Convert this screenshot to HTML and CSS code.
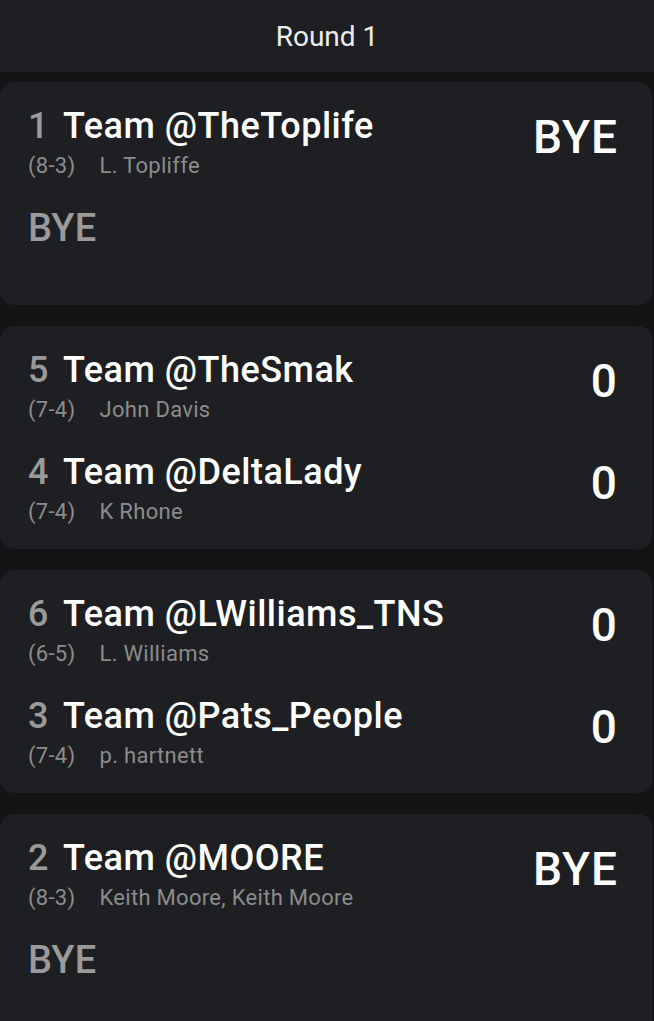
FILE: index.html
```html
<!DOCTYPE html>
<html>
<head>
<meta charset="utf-8">
<link rel="stylesheet" href="styles.css">
</head>
<body>
<header class="topbar">Round 1</header>
<main class="list">
  <section class="card">
    <div class="row">
      <div class="info">
        <div class="name"><span class="seed">1</span>Team @TheToplife</div>
        <div class="sub"><span class="rec">(8-3)</span>L. Topliffe</div>
      </div>
      <div class="score score-bye">BYE</div>
    </div>
    <div class="row">
      <div class="info">
        <div class="bye">BYE</div>
      </div>
    </div>
  </section>
  <section class="card">
    <div class="row">
      <div class="info">
        <div class="name"><span class="seed">5</span>Team @TheSmak</div>
        <div class="sub"><span class="rec">(7-4)</span>John Davis</div>
      </div>
      <div class="score">0</div>
    </div>
    <div class="row">
      <div class="info">
        <div class="name"><span class="seed">4</span>Team @DeltaLady</div>
        <div class="sub"><span class="rec">(7-4)</span>K Rhone</div>
      </div>
      <div class="score">0</div>
    </div>
  </section>
  <section class="card">
    <div class="row">
      <div class="info">
        <div class="name"><span class="seed">6</span>Team @LWilliams_TNS</div>
        <div class="sub"><span class="rec">(6-5)</span>L. Williams</div>
      </div>
      <div class="score">0</div>
    </div>
    <div class="row">
      <div class="info">
        <div class="name"><span class="seed">3</span>Team @Pats_People</div>
        <div class="sub"><span class="rec">(7-4)</span>p. hartnett</div>
      </div>
      <div class="score">0</div>
    </div>
  </section>
  <section class="card">
    <div class="row">
      <div class="info">
        <div class="name"><span class="seed">2</span>Team @MOORE</div>
        <div class="sub"><span class="rec">(8-3)</span>Keith Moore, Keith Moore</div>
      </div>
      <div class="score score-bye">BYE</div>
    </div>
    <div class="row">
      <div class="info">
        <div class="bye">BYE</div>
      </div>
    </div>
  </section>
</main>
</body>
</html>
```

FILE: styles.css
```css
html, body {
  margin: 0;
  padding: 0;
  background: #131416;
  font-family: Roboto, "Liberation Sans", sans-serif;
  overflow: hidden;
}
.topbar {
  height: 72px;
  background: #1e1f22;
  color: #ececec;
  font-size: 28px;
  font-weight: 400;
  display: flex;
  align-items: center;
  justify-content: center;
}
.list {
  display: flex;
  flex-direction: column;
  gap: 21px;
  padding-top: 10px;
  width: 652px;
}
.card {
  background: #1e1f22;
  border-radius: 14px;
  padding: 24px 35px 17px 28px;
  display: flex;
  flex-direction: column;
  gap: 22px;
}
.row {
  display: flex;
  justify-content: space-between;
  align-items: flex-start;
  height: 80px;
}
.name {
  color: #ffffff;
  font-size: 36px;
  font-weight: 500;
  letter-spacing: 0.5px;
  line-height: 40px;
  white-space: nowrap;
}
.seed {
  color: #9a9a9a;
  margin-right: 14px;
  font-variant-numeric: tabular-nums;
}
.sub {
  color: #8c8c8c;
  font-size: 22px;
  letter-spacing: 0.3px;
  line-height: 40px;
  white-space: nowrap;
}
.rec {
  margin-right: 24px;
}
.bye {
  color: #9a9a9a;
  font-size: 38px;
  font-weight: 500;
  letter-spacing: 0.3px;
  line-height: 40px;
}
.score {
  color: #ffffff;
  font-size: 46px;
  font-weight: 500;
  line-height: 62px;
}
.score-bye {
  letter-spacing: 1px;
  margin-right: -1px;
}
```
